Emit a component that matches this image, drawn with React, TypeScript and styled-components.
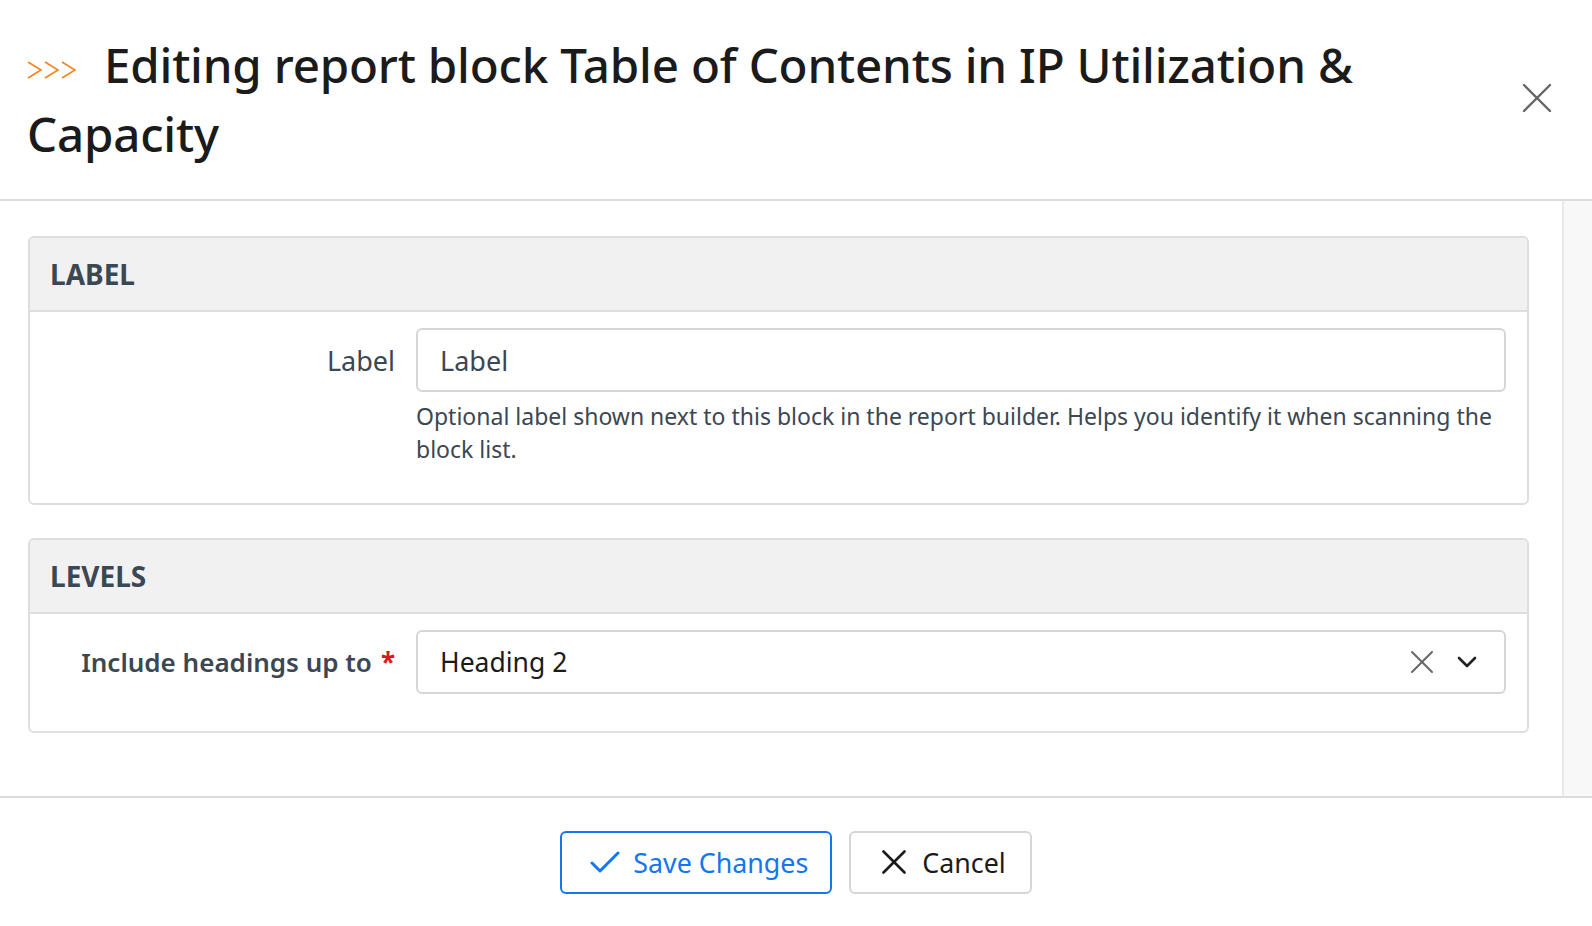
import React from 'react'
import styled, { createGlobalStyle } from 'styled-components'

const GlobalStyle = createGlobalStyle`
  html, body {
    margin: 0;
    padding: 0;
    height: 100%;
    background: #ffffff;
    font-family: "Noto Sans", "Open Sans", sans-serif;
  }
  #root {
    height: 100%;
  }
  * {
    box-sizing: border-box;
  }
`

const Modal = styled.div`
  display: flex;
  flex-direction: column;
  height: 926px;
  width: 100%;
  background: #fff;
`

const Header = styled.div`
  display: flex;
  flex-direction: row;
  align-items: center;
  justify-content: space-between;
  padding: 26px 38px 31px 27px;
  border-bottom: 2px solid #dcdcdc;
  flex-shrink: 0;
`

const Title = styled.h1`
  margin: 0;
  max-width: 1360px;
  font-size: 47.5px;
  line-height: 69px;
  font-weight: 500;
  color: #1b1b1b;
  letter-spacing: -0.2px;
`

const Chevrons = styled.span`
  display: inline-block;
  width: 50px;
  margin-right: 27px;
  vertical-align: 4px;
`

const CloseButton = styled.button`
  display: flex;
  align-items: center;
  justify-content: center;
  width: 34px;
  height: 34px;
  margin-top: 2px;
  padding: 0;
  border: none;
  background: none;
  color: #666;
  cursor: pointer;
`

const Body = styled.div`
  flex: 1;
  min-height: 0;
  display: flex;
  flex-direction: row;
`

const Content = styled.div`
  flex: 1;
  padding: 35px 33px 40px 28px;
  display: flex;
  flex-direction: column;
  gap: 33px;
`

// the empty scroll track on the right of the body
const Gutter = styled.div`
  width: 30px;
  flex-shrink: 0;
  background: #f8f8f8;
  border-left: 2px solid #e9e9e9;
`

const Card = styled.section`
  border: 2px solid #dedede;
  border-radius: 6px;
  background: #fff;
  overflow: hidden;
`

const CardHeader = styled.div`
  height: 74px;
  display: flex;
  align-items: center;
  padding: 0 20px;
  background: #f1f1f1;
  border-bottom: 2px solid #dedede;
  font-size: 28px;
  font-weight: 700;
  color: #3b4752;
  text-transform: uppercase;
`

const CardBody = styled.div`
  padding: 16px 21px 37px 21px;
`

const FormRow = styled.div`
  display: grid;
  grid-template-columns: 344px 1fr;
  column-gap: 21px;
  align-items: start;
`

const FieldLabel = styled.label<{ $strong?: boolean }>`
  height: 64px;
  display: flex;
  align-items: center;
  justify-content: flex-end;
  font-size: ${(p) => (p.$strong ? '26px' : '27px')};
  font-weight: ${(p) => (p.$strong ? 600 : 400)};
  color: #3b4752;
  white-space: nowrap;
`

const Required = styled.span`
  color: #d7191f;
  font-weight: 700;
  margin-left: 9px;
`

const Field = styled.div`
  display: flex;
  flex-direction: column;
`

const TextInput = styled.input`
  height: 64px;
  width: 100%;
  padding: 0 22px;
  border: 2px solid #d6d6d6;
  border-radius: 6px;
  font-family: inherit;
  font-size: 27px;
  color: #3b4752;
  outline: none;
  &::placeholder {
    color: #3b4752;
  }
`

const Help = styled.p`
  margin: 8px 0 0 0;
  font-size: 23px;
  line-height: 33px;
  color: #3b4752;
`

const SelectBox = styled.div`
  height: 64px;
  display: flex;
  align-items: center;
  padding: 0 26px 0 22px;
  border: 2px solid #d6d6d6;
  border-radius: 6px;
  font-size: 26.5px;
  color: #1b1b1b;
`

const SelectValue = styled.span`
  flex: 1;
`

const SelectIcon = styled.span<{ $color: string }>`
  display: flex;
  align-items: center;
  color: ${(p) => p.$color};
  margin-left: 22px;
`

const Footer = styled.div`
  flex-shrink: 0;
  height: 130px;
  display: flex;
  align-items: center;
  justify-content: center;
  gap: 17px;
  border-top: 2px solid #dcdcdc;
`

const Button = styled.button<{ $primary?: boolean }>`
  height: 63px;
  display: flex;
  align-items: center;
  gap: ${(p) => (p.$primary ? '13px' : '16px')};
  padding: ${(p) => (p.$primary ? '0 22px 0 28px' : '0 24px 0 31px')};
  border-radius: 6px;
  border: 2px solid ${(p) => (p.$primary ? '#1476ee' : '#d6d6d6')};
  background: #fff;
  color: ${(p) => (p.$primary ? '#1476ee' : '#1b1b1b')};
  font-family: inherit;
  font-size: 26.8px;
  cursor: pointer;
`

const App = () => {
  return (
    <>
      <GlobalStyle />
      <Modal>
        <Header>
          <Title>
            <Chevrons>
              <svg width="50" height="18" viewBox="0 0 50 18" fill="none" stroke="#f5841f" strokeWidth="1.6">
                <polyline points="1,1 14,9 1,17" />
                <polyline points="18,1 31,9 18,17" />
                <polyline points="35,1 48,9 35,17" />
              </svg>
            </Chevrons>
            Editing report block Table of Contents in IP Utilization &amp; Capacity
          </Title>
          <CloseButton aria-label="Close">
            <svg width="30" height="30" viewBox="0 0 30 30" stroke="currentColor" strokeWidth="2.4" strokeLinecap="round">
              <line x1="2" y1="2" x2="28" y2="28" />
              <line x1="28" y1="2" x2="2" y2="28" />
            </svg>
          </CloseButton>
        </Header>

        <Body>
          <Content>
            <Card>
              <CardHeader>Label</CardHeader>
              <CardBody>
                <FormRow>
                  <FieldLabel>Label</FieldLabel>
                  <Field>
                    <TextInput placeholder="Label" />
                    <Help>
                      Optional label shown next to this block in the report builder. Helps you identify it when scanning the block list.
                    </Help>
                  </Field>
                </FormRow>
              </CardBody>
            </Card>

            <Card>
              <CardHeader>Levels</CardHeader>
              <CardBody>
                <FormRow>
                  <FieldLabel $strong>
                    Include headings up to<Required>*</Required>
                  </FieldLabel>
                  <SelectBox>
                    <SelectValue>Heading 2</SelectValue>
                    <SelectIcon $color="#666">
                      <svg width="24" height="24" viewBox="0 0 24 24" stroke="currentColor" strokeWidth="2" strokeLinecap="round">
                        <line x1="2" y1="2" x2="22" y2="22" />
                        <line x1="22" y1="2" x2="2" y2="22" />
                      </svg>
                    </SelectIcon>
                    <SelectIcon $color="#222">
                      <svg width="22" height="14" viewBox="0 0 22 14" fill="none" stroke="currentColor" strokeWidth="2.6" strokeLinecap="round" strokeLinejoin="round">
                        <polyline points="3,3 11,11 19,3" />
                      </svg>
                    </SelectIcon>
                  </SelectBox>
                </FormRow>
              </CardBody>
            </Card>
          </Content>
          <Gutter />
        </Body>

        <Footer>
          <Button $primary>
            <svg width="30" height="24" viewBox="0 0 30 24" fill="none" stroke="currentColor" strokeWidth="3" strokeLinecap="round" strokeLinejoin="round">
              <polyline points="2,13 10,21 28,3" />
            </svg>
            Save Changes
          </Button>
          <Button>
            <svg width="24" height="24" viewBox="0 0 24 24" stroke="currentColor" strokeWidth="2.6" strokeLinecap="round">
              <line x1="1.5" y1="1.5" x2="22.5" y2="22.5" />
              <line x1="22.5" y1="1.5" x2="1.5" y2="22.5" />
            </svg>
            Cancel
          </Button>
        </Footer>
      </Modal>
    </>
  )
}

export default App
